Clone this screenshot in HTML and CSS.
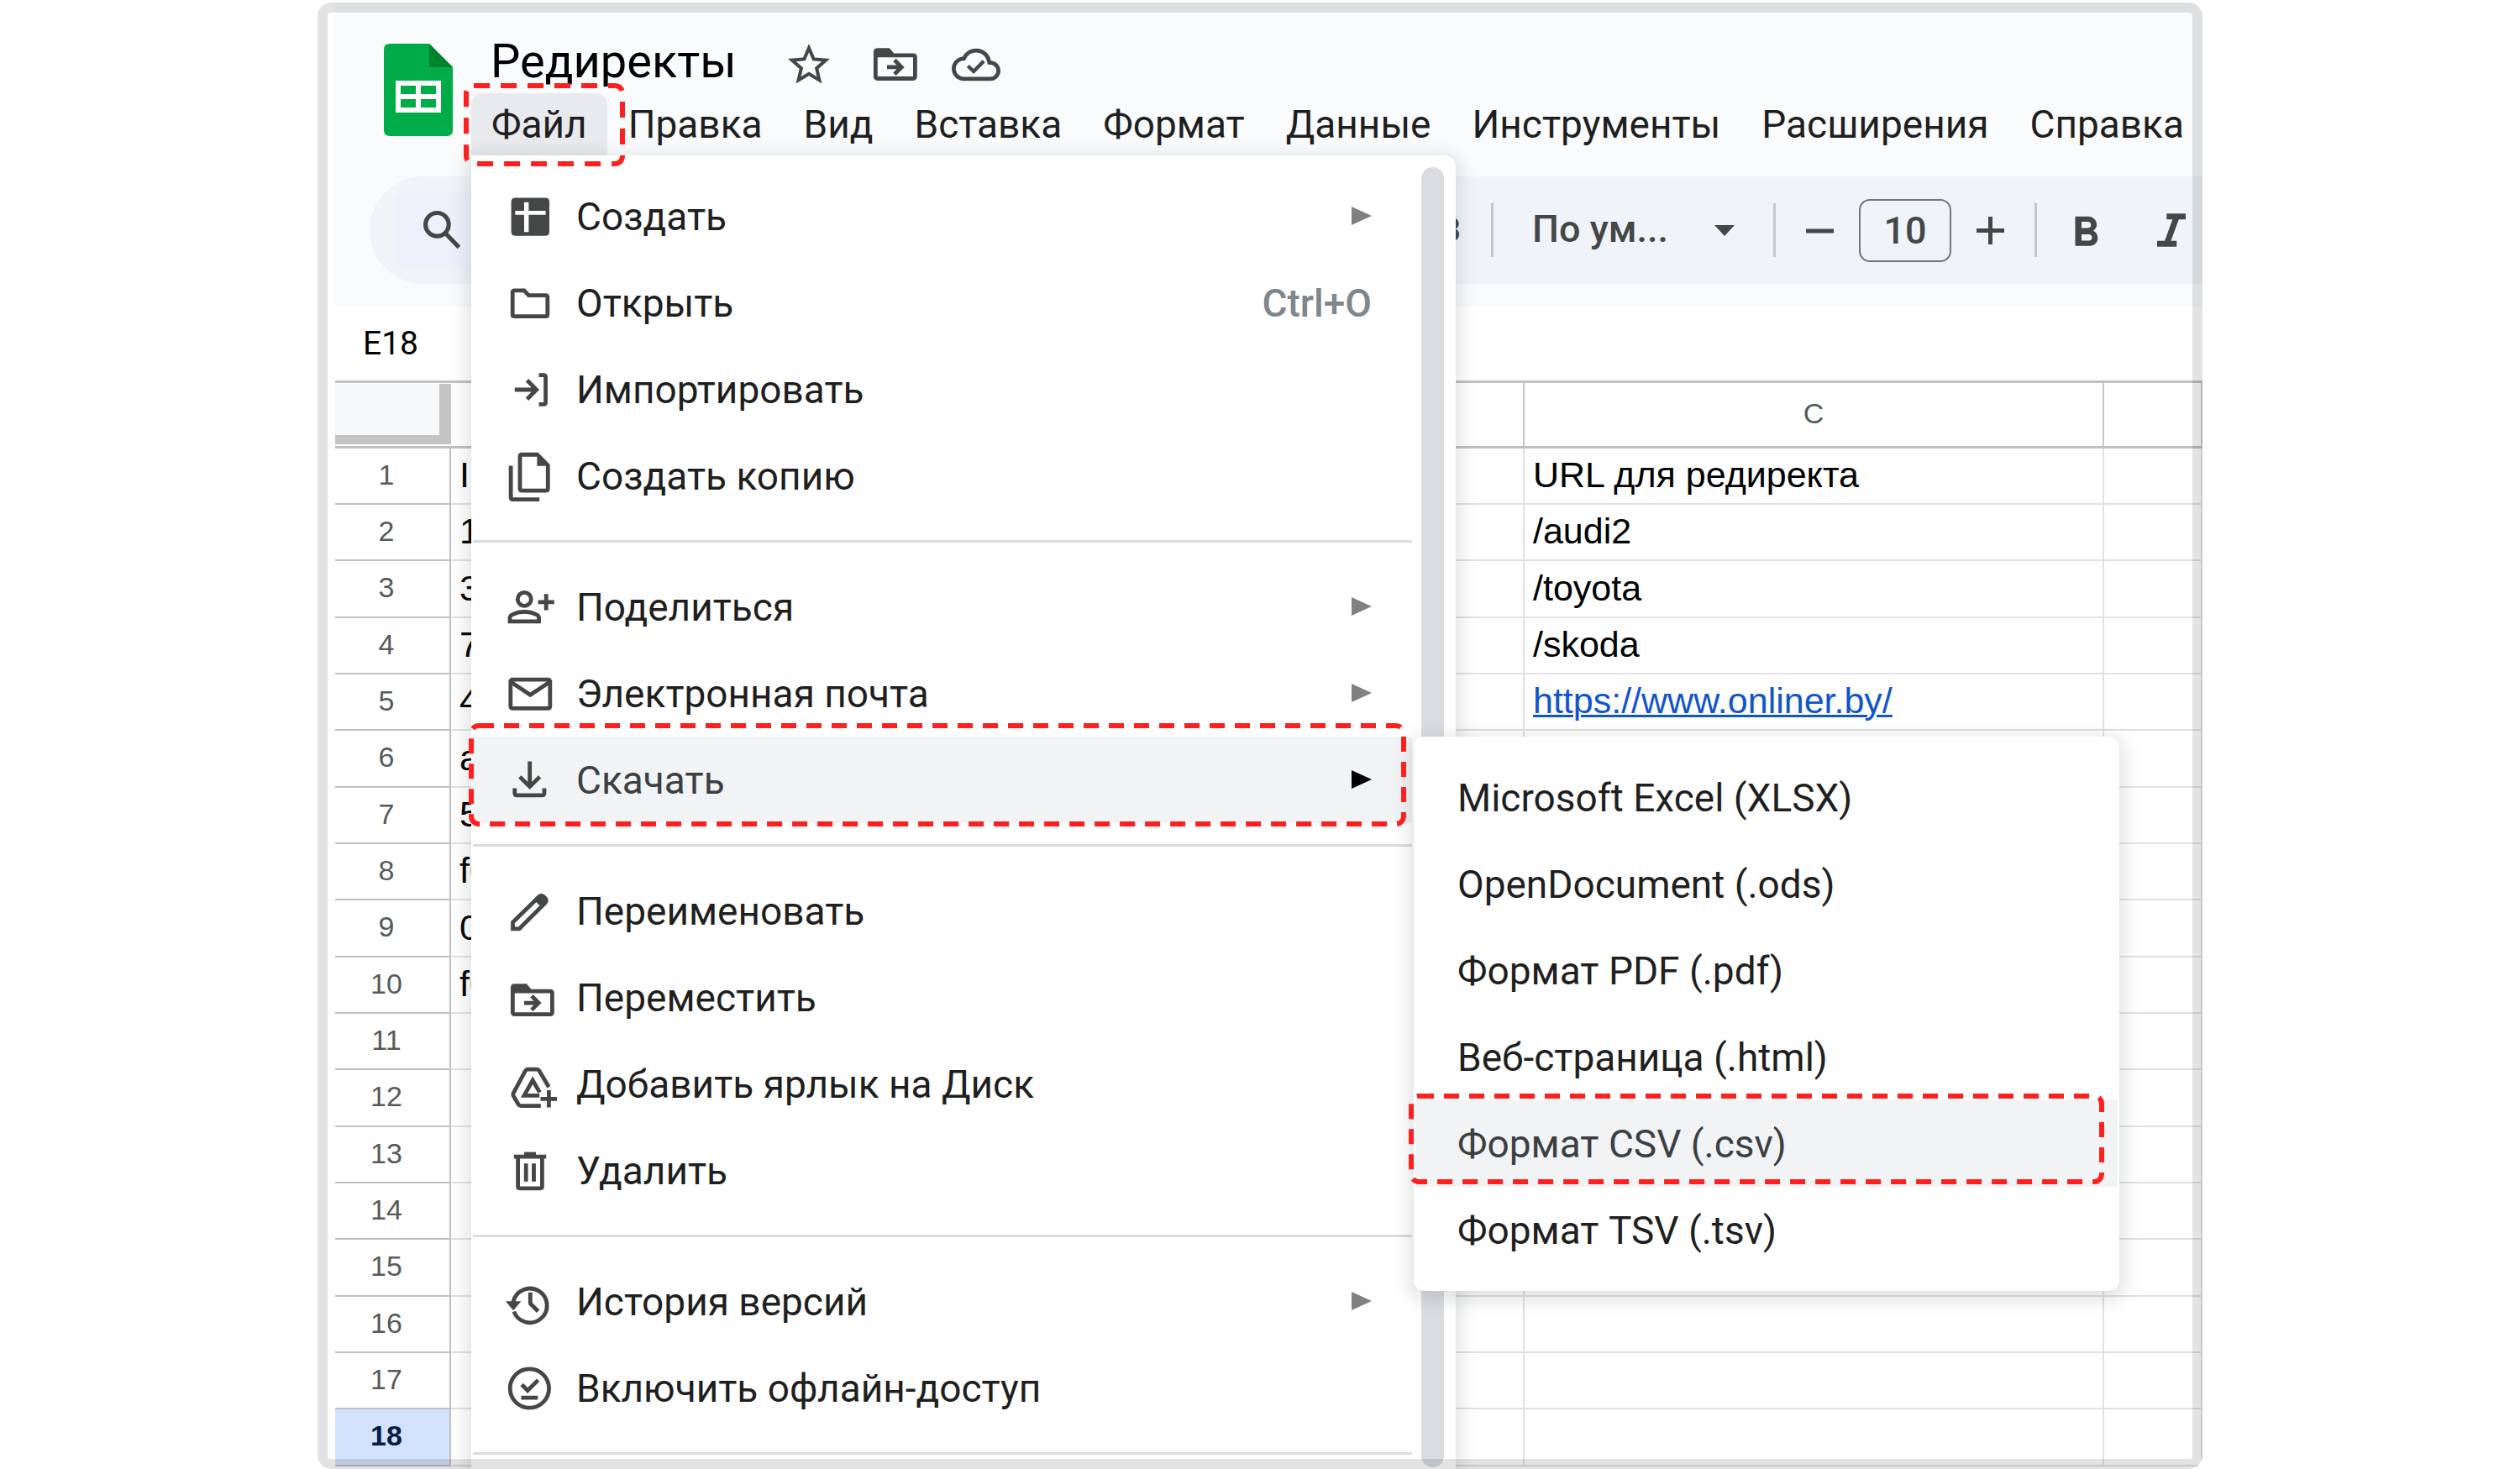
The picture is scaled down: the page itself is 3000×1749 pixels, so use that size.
FILE: index.html
```html
<!DOCTYPE html>
<html lang="ru">
<head>
<meta charset="utf-8">
<meta name="viewport" content="width=device-width, initial-scale=1">
<title>Редиректы</title>
<link rel="stylesheet" href="styles.css">
</head>
<body>
<svg class="sprite" aria-hidden="true">
  <symbol id="i-move" viewBox="0 0 20 20">
    <path fill="currentColor" fill-rule="evenodd" d="M4.300 4.800H8.700L10.400 6.800H17.500Q19 6.800 19 8.300V15.400Q19 16.900 17.500 16.900H4.300Q2.800 16.900 2.800 15.400V6.300Q2.800 4.800 4.300 4.800ZM4.300 8.300V15.400H17.500V8.300Z"/>
    <path fill="none" stroke="currentColor" stroke-width="1.500" d="M7.800 11.900H13M10.600 9.300L13.200 11.900L10.600 14.500"/>
  </symbol>
  <symbol id="i-arrow" viewBox="0 0 24 22"><path fill="currentColor" d="M0 0L24 11L0 22Z"/></symbol>
</svg>

<div class="app">
  <header class="header">
    <div class="brand">
      <svg class="logo" viewBox="0 0 82 110" aria-label="Таблицы" role="img">
        <path fill="#00ac47" d="M7 0H54L82 28V103Q82 110 75 110H7Q0 110 0 103V7Q0 0 7 0Z"/>
        <path fill="#00832d" d="M54 0L82 28H54Z"/>
        <path fill="#fff" fill-rule="evenodd" d="M14 44H68V82H14ZM20 50V60H38V50ZM44 50V60H62V50ZM20 66V76H38V66ZM44 66V76H62V66Z"/>
      </svg>
      <div class="heading">
        <div class="title-row">
          <h1 class="title">Редиректы</h1>
          <div class="title-icons">
            <button class="icon-button" aria-label="Пометить"><svg class="icon-star" viewBox="0 0 24 24"><path fill="currentColor" d="M22 9.240l-7.190-.62L12 2 9.190 8.630 2 9.240l5.460 4.730L5.820 21 12 17.270 18.180 21l-1.630-7.030L22 9.240zM12 15.400l-3.760 2.270 1-4.280-3.320-2.880 4.380-.38L12 6.100l1.710 4.040 4.380.38-3.320 2.880 1 4.280L12 15.400z"/></svg></button>
            <button class="icon-button" aria-label="Переместить"><svg class="icon" viewBox="0 1 20 20"><use href="#i-move" width="20" height="20"/></svg></button>
            <button class="icon-button" aria-label="Статус документа"><svg class="icon-cloud" viewBox="0 0 24 24"><path fill="currentColor" d="M19.350 10.040A7.490 7.490 0 0 0 12 4C9.110 4 6.600 5.640 5.350 8.040A5.994 5.994 0 0 0 0 14c0 3.310 2.690 6 6 6h13c2.760 0 5-2.240 5-5 0-2.640-2.050-4.780-4.650-4.960zM19 18H6c-2.210 0-4-1.790-4-4 0-2.050 1.530-3.760 3.560-3.970l1.070-.11.5-.95A5.469 5.469 0 0 1 12 6c2.620 0 4.880 1.860 5.390 4.430l.3 1.500 1.530.11A2.980 2.980 0 0 1 22 15c0 1.650-1.350 3-3 3z"/><path fill="none" stroke="currentColor" stroke-width="1.800" d="M8 12.600L10.800 15.300L15.800 10.200"/></svg></button>
          </div>
        </div>
        <nav aria-label="Главное меню">
          <ul class="menubar">
            <li class="menubar-item open">
              <button class="menubar-button">Файл</button>
              <div class="menu">
                <ul class="menu-list">
                  <li><button class="menu-item"><svg class="icon" viewBox="0 0 20 20"><path fill="currentColor" fill-rule="evenodd" d="M4.500 3H15.700Q17.200 3 17.200 4.500V15.600Q17.200 17.100 15.700 17.100H4.500Q3 17.100 3 15.600V4.500Q3 3 4.500 3ZM7.800 4.600V7.800H4.500V9.300H7.800V15.700H9.500V9.300H15.800V7.800H9.500V4.600Z"/></svg><span>Создать</span><svg class="arrow"><use href="#i-arrow"/></svg></button></li>
                  <li><button class="menu-item"><svg class="icon" viewBox="0 0 20 20"><path class="line" d="M4.200 5.300H7.800L9.500 7.100H15.800Q16.500 7.100 16.500 7.800V14.200Q16.500 14.900 15.800 14.900H4.200Q3.500 14.900 3.500 14.200V6Q3.500 5.300 4.200 5.300Z"/></svg><span>Открыть</span><kbd>Ctrl+O</kbd></button></li>
                  <li><button class="menu-item"><svg class="icon" viewBox="0 0 20 20"><path class="line" d="M4.300 10H12.600M8.900 6.500L12.400 10L8.900 13.500M13.300 4.600H15Q15.800 4.600 15.800 5.400V14.600Q15.800 15.400 15 15.400H13.300"/></svg><span>Импортировать</span></button></li>
                  <li><button class="menu-item"><svg class="icon" viewBox="0 0 20 20"><path fill="currentColor" fill-rule="evenodd" d="M7 1.200H13L17.400 5.600V14.600Q17.400 16.100 15.900 16.100H7Q5.500 16.100 5.500 14.600V2.700Q5.500 1.200 7 1.200ZM7 2.700V14.600H15.900V6.200H12.600V2.700Z"/><path fill="currentColor" d="M2.100 6.100H3.600V17.900H13.500V19.400H3.600Q2.100 19.400 2.100 17.900Z"/></svg><span>Создать копию</span></button></li>
                  <li class="divider" role="separator"></li>
                  <li><button class="menu-item"><svg class="icon" viewBox="0 0 20 20"><circle class="line" cx="7.900" cy="7" r="2.500"/><path class="line" d="M2.500 15.300V14Q2.500 13.100 3.500 12.700Q5.500 11.700 7.900 11.700Q10.300 11.700 12.300 12.700Q13.300 13.100 13.300 14V15.300ZM13 8.100H19M16 5.100V11.100"/></svg><span>Поделиться</span><svg class="arrow"><use href="#i-arrow"/></svg></button></li>
                  <li><button class="menu-item"><svg class="icon" viewBox="0 0 20 20"><rect class="line" x="2.750" y="4.750" width="14.700" height="10.700" rx=".7"/><path class="line" d="M3 5.700L10.100 10.400L17.200 5.700"/></svg><span>Электронная почта</span><svg class="arrow"><use href="#i-arrow"/></svg></button></li>
                  <li class="has-submenu">
                    <button class="menu-item active"><svg class="icon" viewBox="0 0 20 20"><path class="line" d="M9.900 3V12.100M6.200 8.700L9.900 12.400L13.600 8.700M4.300 13V14.800Q4.300 15.600 5.100 15.600H14.500Q15.300 15.600 15.300 14.800V13"/></svg><span>Скачать</span><svg class="arrow"><use href="#i-arrow"/></svg></button>
                    <svg class="mark mark-download" aria-hidden="true"><rect x="3" y="3" rx="9"/></svg>
                    <ul class="submenu">
                      <li><button class="menu-item">Microsoft Excel (XLSX)</button></li>
                      <li><button class="menu-item">OpenDocument (.ods)</button></li>
                      <li><button class="menu-item">Формат PDF (.pdf)</button></li>
                      <li><button class="menu-item">Веб-страница (.html)</button></li>
                      <li class="marked"><button class="menu-item active">Формат CSV (.csv)</button><svg class="mark mark-csv" aria-hidden="true"><rect x="3" y="3" rx="9"/></svg></li>
                      <li><button class="menu-item">Формат TSV (.tsv)</button></li>
                    </ul>
                  </li>
                  <li class="divider" role="separator"></li>
                  <li><button class="menu-item"><svg class="icon" viewBox="0 0 20 20"><path class="line" d="M3.600 16.500V14.100L13.300 4.600Q14.200 3.800 15.100 4.600L15.600 5.100Q16.400 6 15.600 6.900L6 16.500Z"/><path fill="currentColor" d="M11.300 5.600L13 4Q14.300 3 15.500 4L16.200 4.800Q17.200 6 16.200 7.100L14.600 8.800Z"/></svg><span>Переименовать</span></button></li>
                  <li><button class="menu-item"><svg class="icon"><use href="#i-move"/></svg><span>Переместить</span></button></li>
                  <li><button class="menu-item"><svg class="icon" viewBox="0 0 20 20"><path class="line" d="M14 18H6.600Q6 18 5.700 17.500L3.800 14.300Q3.500 13.800 3.800 13.300L8.300 4.900Q8.600 4.400 9.200 4.400H12.500Q13.100 4.400 13.400 4.900L17 11M13.500 14.200H7.800L11 8.500L13.600 13M17 12.200V18.600M13.900 15.400H20"/></svg><span>Добавить ярлык на Диск</span></button></li>
                  <li><button class="menu-item"><svg class="icon" viewBox="0 0 20 20"><path class="line" d="M4 4.700H16M5.500 4.700V15.800Q5.500 16.500 6.200 16.500H13.800Q14.500 16.500 14.500 15.800V4.700M8.500 7.300V14M11.400 7.300V14"/><path fill="currentColor" d="M7.800 3H12.200V4.500H7.800Z"/></svg><span>Удалить</span></button></li>
                  <li class="divider" role="separator"></li>
                  <li><button class="menu-item"><svg class="icon" viewBox="0 0 20 20"><path class="line" d="M4 13.600A6.350 6.350 0 1 0 3.800 9.800V11.200M10.100 6.500V10.600L13 13.500"/><path fill="currentColor" d="M.9 9.800H6.700L3.800 13.200Z"/></svg><span>История версий</span><svg class="arrow"><use href="#i-arrow"/></svg></button></li>
                  <li><button class="menu-item"><svg class="icon" viewBox="0 0 20 20"><circle class="line" cx="9.800" cy="10" r="7.250"/><path class="line" d="M6.900 8.600L9.100 10.800L13 6.900M6.700 13.500H12.900"/></svg><span>Включить офлайн-доступ</span></button></li>
                  <li class="divider" role="separator"></li>
                </ul>
                <div class="scroll-thumb"></div>
              </div>
              <svg class="mark mark-file" aria-hidden="true"><rect x="3" y="3" rx="9"/></svg>
            </li>
            <li><button class="menubar-button">Правка</button></li>
            <li><button class="menubar-button">Вид</button></li>
            <li><button class="menubar-button">Вставка</button></li>
            <li><button class="menubar-button">Формат</button></li>
            <li><button class="menubar-button">Данные</button></li>
            <li><button class="menubar-button">Инструменты</button></li>
            <li><button class="menubar-button">Расширения</button></li>
            <li><button class="menubar-button">Справка</button></li>
          </ul>
        </nav>
      </div>
    </div>

    <div class="toolbar">
      <button class="search" aria-label="Поиск в меню"><svg class="icon-search" viewBox="0 0 45 45"><circle cx="17" cy="16" r="13.500"/><path d="M26.500 26L42.500 42.500"/></svg></button>
      <div class="tools">
        <button class="number-format">123</button>
        <span class="separator"></span>
        <label class="font-family">
          <select aria-label="Шрифт"><option>По ум...</option></select>
          <svg class="caret" viewBox="0 0 24 13"><path fill="currentColor" d="M0 0H24L12 13Z"/></svg>
        </label>
        <span class="separator"></span>
        <div class="stepper">
          <button class="icon-button" aria-label="Уменьшить размер шрифта"><svg class="icon-step" viewBox="0 0 33 33"><path d="M0 17H33"/></svg></button>
          <input class="font-size" aria-label="Размер шрифта" value="10">
          <button class="icon-button" aria-label="Увеличить размер шрифта"><svg class="icon-step" viewBox="0 0 33 33"><path d="M0 16.500H33M16.500 0V33"/></svg></button>
        </div>
        <span class="separator"></span>
        <div class="formats">
          <button class="icon-button" aria-label="Полужирный"><svg class="icon-bold" viewBox="0 -1.500 24 24"><path fill="currentColor" d="M15.600 10.790c.97-.67 1.650-1.770 1.650-2.790 0-2.260-1.750-4-4-4H7v14h7.040c2.090 0 3.710-1.700 3.710-3.790 0-1.520-.86-2.820-2.150-3.420zM10 6.500h3c.83 0 1.500.67 1.500 1.500s-.67 1.500-1.500 1.500h-3v-3zm3.500 9H10v-3h3.500c.83 0 1.500.67 1.500 1.500s-.67 1.500-1.500 1.500z"/></svg></button>
          <button class="icon-button" aria-label="Курсив"><svg class="icon-italic" viewBox="0 -1 24 24"><path fill="currentColor" d="M10 4v2.500h2.500l-3.300 9H6V18h8.200v-2.500h-2.400l3.300-9H18V4z"/></svg></button>
        </div>
      </div>
    </div>
  </header>

  <main>
    <div class="name-bar"><input class="name-box" aria-label="Поле имени" value="E18"></div>
    <table class="sheet">
      <colgroup><col class="col-head"><col class="col-a"><col class="col-b"><col class="col-c"><col></colgroup>
      <thead>
        <tr><td class="corner"><div class="corner-box"></div></td><th scope="col" aria-label="A"></th><th scope="col" aria-label="B"></th><th scope="col">C</th><th scope="col" aria-label="D"></th></tr>
      </thead>
      <tbody>
        <tr><th scope="row">1</th><td>ID</td><td></td><td>URL для редиректа</td><td></td></tr>
        <tr><th scope="row">2</th><td>1</td><td></td><td>/audi2</td><td></td></tr>
        <tr><th scope="row">3</th><td>3</td><td></td><td>/toyota</td><td></td></tr>
        <tr><th scope="row">4</th><td>7</td><td></td><td>/skoda</td><td></td></tr>
        <tr><th scope="row">5</th><td>4</td><td></td><td><a href="https://www.onliner.by/">https://www.onliner.by/</a></td><td></td></tr>
        <tr><th scope="row">6</th><td>a</td><td></td><td></td><td></td></tr>
        <tr><th scope="row">7</th><td>5</td><td></td><td></td><td></td></tr>
        <tr><th scope="row">8</th><td>f0</td><td></td><td></td><td></td></tr>
        <tr><th scope="row">9</th><td>0</td><td></td><td></td><td></td></tr>
        <tr><th scope="row">10</th><td>f0</td><td></td><td></td><td></td></tr>
        <tr><th scope="row">11</th><td></td><td></td><td></td><td></td></tr>
        <tr><th scope="row">12</th><td></td><td></td><td></td><td></td></tr>
        <tr><th scope="row">13</th><td></td><td></td><td></td><td></td></tr>
        <tr><th scope="row">14</th><td></td><td></td><td></td><td></td></tr>
        <tr><th scope="row">15</th><td></td><td></td><td></td><td></td></tr>
        <tr><th scope="row">16</th><td></td><td></td><td></td><td></td></tr>
        <tr><th scope="row">17</th><td></td><td></td><td></td><td></td></tr>
        <tr class="current"><th scope="row">18</th><td></td><td></td><td></td><td></td></tr>
      </tbody>
    </table>
  </main>
</div>
</body>
</html>
```

FILE: styles.css
```css
*, *::before, *::after { box-sizing: border-box; }

body {
  margin: 0;
  background: #fff;
  color: #1f1f1f;
  font-family: Roboto, "Liberation Sans", sans-serif;
  font-size: 45px;
}

ul { margin: 0; padding: 0; list-style: none; }

button, input, select {
  margin: 0;
  padding: 0;
  border: 0;
  background: none;
  color: inherit;
  font: inherit;
}

svg { display: block; flex: none; }
.sprite { position: absolute; width: 0; height: 0; }

/* Framed application window */
.app {
  position: relative;
  width: 74.8%;
  margin: 3px auto 0;
  padding: 0 0 3px 21px;
  overflow: hidden;
  border-radius: 16px;
}
.app::after {
  content: "";
  position: absolute;
  inset: 0;
  z-index: 10;
  border: 12px solid rgba(0, 0, 0, 0.11);
  border-radius: 16px;
  pointer-events: none;
}

/* Header */
.header { padding: 33px 0 27px; background: #f9fbfd; }
.brand { display: flex; align-items: flex-start; gap: 22px; padding-left: 58px; }
.logo { width: 82px; height: 110px; margin-top: 16px; }
.title-row { display: flex; align-items: center; height: 75px; gap: 56px; padding-left: 23px; }
.title { margin: 0; color: #000; font-size: 56px; font-weight: 400; line-height: 75px; }
.title-icons { display: flex; align-items: center; gap: 38px; padding-top: 6px; }
.icon-button { display: block; color: #444746; }
.icon { width: 64px; height: 64px; color: #444746; }
.icon-star { width: 60px; height: 60px; }
.icon-cloud { width: 58px; height: 58px; }
.line { fill: none; stroke: currentColor; stroke-width: 1.5; }

.menubar { display: flex; gap: 1px; }
.menubar-item { position: relative; }
.menubar-button {
  display: block;
  height: 74px;
  padding: 0 24px;
  border-radius: 13px 13px 0 0;
  font-size: 46px;
  line-height: 74px;
  white-space: nowrap;
}
.open > .menubar-button { background: #e8eaed; }

/* File menu */
.menu {
  position: absolute;
  top: 100%;
  left: 0;
  z-index: 5;
  display: flex;
  width: 1172px;
  padding: 0 14px 0 2px;
  gap: 11px;
  background: #fff;
  border-radius: 0 13px 13px 13px;
  box-shadow: 0 6px 20px 6px rgba(60, 64, 67, 0.15);
}
.menu-list { flex: 1; padding: 21px 0 4px; font-size: 46px; }
.scroll-thumb { width: 27px; margin: 14px 0; border-radius: 14px; background: #dadce0; }
.menu-item {
  display: flex;
  align-items: center;
  width: 100%;
  height: 103px;
  padding: 0 48px 0 36px;
  gap: 23px;
  text-align: left;
  white-space: nowrap;
}
.menu-item.active { background: #f1f3f4; color: #3c4043; }
.arrow { width: 24px; height: 24px; margin-left: auto; padding-bottom: 2px; color: #808080; }
.active .arrow { color: #000; }
kbd { margin-left: auto; color: #80868b; font: inherit; font-weight: 500; }
.divider { height: 53px; padding-top: 25px; }
.divider::before { content: ""; display: block; height: 3px; background: #dadce0; }

.has-submenu, .marked { position: relative; }
.submenu {
  position: absolute;
  top: 0;
  left: 100%;
  z-index: 6;
  width: 840px;
  margin-left: 2px;
  padding: 21px 2px;
  background: #fff;
  border-radius: 13px;
  box-shadow: 0 6px 20px 6px rgba(60, 64, 67, 0.15);
}
.submenu .menu-item { padding: 0 50px; }

/* Dashed callouts */
.mark { position: absolute; z-index: 7; overflow: visible; pointer-events: none; }
.mark rect {
  width: calc(100% - 6px);
  height: calc(100% - 6px);
  fill: none;
  stroke: #ff1f1f;
  stroke-width: 6px;
  stroke-dasharray: 18 12;
}
.mark-file { top: -12px; left: -9px; width: 192px; height: 99px; }
.mark-file rect { stroke-dasharray: 19 13; }
.mark-download { top: -16px; left: -5px; width: calc(100% - 2px); height: 123px; }
.mark-csv { top: -8px; left: -8px; width: calc(100% - 8px); height: 108px; }

/* Toolbar */
.toolbar {
  display: flex;
  align-items: center;
  justify-content: space-between;
  height: 128px;
  margin: 25px 0 0 41px;
  padding: 0 3px 0 30px;
  border-radius: 64px 0 0 64px;
  background: #f0f4f9;
  color: #444746;
}
.search { width: 240px; height: 90px; padding-left: 33px; border-radius: 13px; background: #ecf1fb; }
.icon-search { width: 46px; height: 46px; fill: none; stroke: #444746; stroke-width: 5; }
.tools { display: flex; align-items: center; }
.number-format { font-size: 38px; font-weight: 500; }
.separator { width: 3px; height: 64px; margin: 0 36px; background: #c7c7c7; }
.font-family { display: flex; align-items: center; justify-content: space-between; width: 261px; padding: 0 10px; }
.font-family select { appearance: none; padding-bottom: 3px; font-weight: 500; }
.caret { width: 24px; height: 13px; }
.stepper { display: flex; align-items: center; gap: 30px; }
.font-size {
  width: 110px;
  height: 75px;
  border: 2px solid #747775;
  border-radius: 13px;
  font-weight: 500;
  text-align: center;
}
.icon-step { width: 33px; height: 33px; fill: none; stroke: #444746; stroke-width: 5; }
.formats { display: flex; align-items: center; gap: 38px; margin-left: -8px; }
.icon-bold { width: 60px; height: 60px; }
.icon-italic { width: 68px; height: 68px; }

/* Sheet */
.name-bar { display: flex; align-items: center; height: 88px; padding-left: 33px; }
.name-box { width: 120px; color: #000; font-size: 39px; }

.sheet {
  width: 100%;
  border-top: 3px solid #c0c0c0;
  border-spacing: 0;
  table-layout: fixed;
  font-family: "Liberation Sans", Arial, sans-serif;
}
.col-head { width: 138px; }
.col-a, .col-b { width: 639px; }
.col-c { width: 690px; }
.sheet th { padding: 0 0 3px; color: #575a5a; font-size: 34px; font-weight: 400; }
.sheet thead th {
  height: 78px;
  border-right: 2px solid #c7c7c7;
  border-bottom: 3px solid #c0c0c0;
}
.sheet .corner { height: 78px; padding: 0; border-right: 0; border-bottom: 3px solid #c0c0c0; vertical-align: top; }
.corner-box {
  height: 72px;
  margin-top: 1px;
  border: solid #c4c4c4;
  border-width: 0 14px 11px 0;
  background: #f8f9fb;
}
.sheet tbody tr { height: 67px; }
.sheet tbody tr:nth-child(3n) { height: 68px; }
.sheet tbody th {
  padding-right: 14px;
  border-right: 2px solid #c0c0c0;
  border-bottom: 2px solid #c0c0c0;
}
.sheet td {
  padding: 0 10px 3px;
  border-right: 2px solid #e1e1e1;
  border-bottom: 2px solid #e1e1e1;
  color: #000;
  font-size: 43px;
  line-height: 48px;
  white-space: nowrap;
}
.sheet a { color: #1155cc; text-decoration-thickness: 3px; }
.sheet .current th { background: #d3e3fd; color: #041e49; font-weight: 700; }
```
